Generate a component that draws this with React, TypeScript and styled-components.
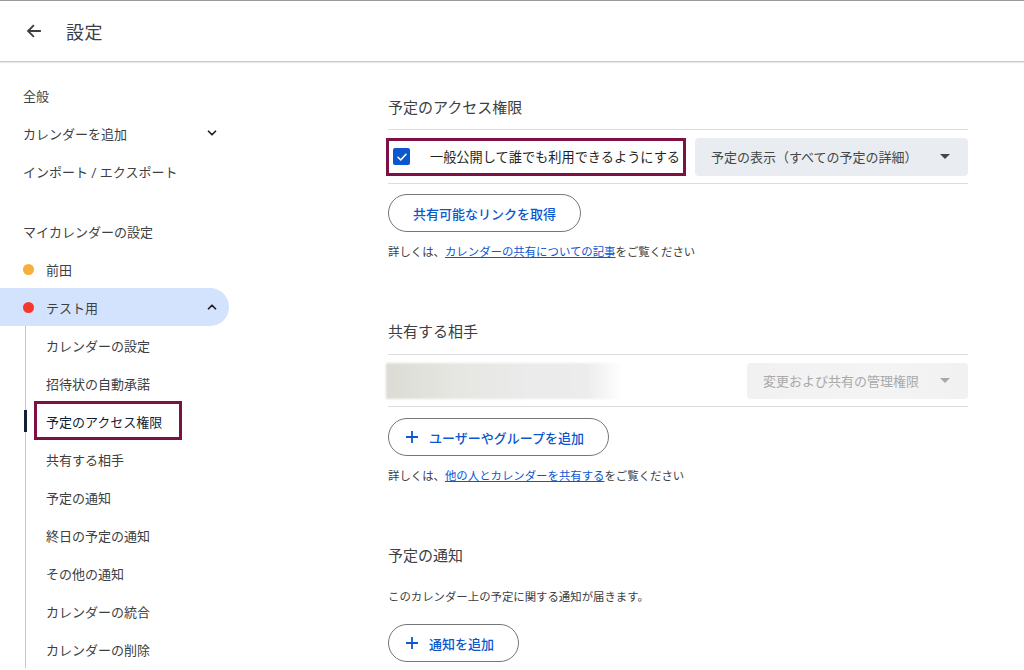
import React from "react";
import styled, { createGlobalStyle } from "styled-components";

const Global = createGlobalStyle`
  html, body { margin: 0; padding: 0; background: #fff; }
  body { font-family: Roboto, "Noto Sans CJK JP", "Noto Sans", sans-serif; color: #3c4043; }
  * { box-sizing: border-box; }
`;

const Page = styled.div`
  width: 1024px;
  height: 670px;
  overflow: hidden;
  border-top: 1px solid #9a9a9a;
  display: flex;
  flex-direction: column;
`;

const Header = styled.header`
  height: 61px;
  flex: none;
  display: flex;
  align-items: center;
  padding-left: 24px;
  border-bottom: 1px solid #c9c9c9;
  box-shadow: 0 1px 1px rgba(0, 0, 0, 0.08);
`;

const BackBtn = styled.div`
  width: 20px;
  height: 20px;
  display: flex;
  align-items: center;
  justify-content: center;
  margin-right: 22px;
  color: #3c4043;
`;

const HeaderTitle = styled.h1`
  margin: 0;
  font-size: 18px;
  font-weight: 400;
  color: #3c4043;
  letter-spacing: 0.5px;
`;

const Body = styled.div`
  flex: 1;
  display: flex;
  min-height: 0;
`;

const Sidebar = styled.nav`
  width: 240px;
  flex: none;
  padding-top: 14px;
  display: flex;
  flex-direction: column;
`;

const NavItem = styled.div<{ $active?: boolean; $gapTop?: number; $h?: number }>`
  height: ${(p) => p.$h ?? 38}px;
  width: 229px;
  display: flex;
  align-items: center;
  padding-left: 23px;
  padding-right: 10px;
  font-size: 13px;
  color: #3c4043;
  margin-top: ${(p) => p.$gapTop ?? 0}px;
  background: ${(p) => (p.$active ? "#d3e3fd" : "transparent")};
  border-radius: 0 19px 19px 0;
`;

const NavLabel = styled.span`
  flex: 1;
`;

const Dot = styled.span<{ $color: string }>`
  width: 11px;
  height: 11px;
  border-radius: 50%;
  background: ${(p) => p.$color};
  margin-right: 12px;
  flex: none;
`;

const SubList = styled.div`
  position: relative;
  display: flex;
  flex-direction: column;
  &::before {
    content: "";
    position: absolute;
    left: 25px;
    top: 0;
    bottom: 0;
    width: 1px;
    background: #c4c7c5;
  }
`;

const SubItem = styled.div<{ $active?: boolean }>`
  position: relative;
  height: 38px;
  display: flex;
  align-items: center;
  padding-left: 46px;
  font-size: 13px;
  color: ${(p) => (p.$active ? "#0b1d3a" : "#3c4043")};
  &::before {
    content: "";
    display: ${(p) => (p.$active ? "block" : "none")};
    position: absolute;
    left: 24px;
    top: 8px;
    width: 3px;
    height: 22px;
    background: #142037;
  }
`;

const HighlightBox = styled.span`
  position: absolute;
  left: 34px;
  top: -1px;
  width: 148px;
  height: 39px;
  border: 3px solid #7e1143;
  pointer-events: none;
`;

const Main = styled.main`
  flex: 1;
  padding-left: 148px;
  padding-top: 34px;
`;

const Content = styled.div`
  width: 580px;
  display: flex;
  flex-direction: column;
`;

const SectionTitle = styled.h2<{ $gapTop?: number }>`
  margin: ${(p) => p.$gapTop ?? 0}px 0 0 0;
  font-size: 15px;
  line-height: 24px;
  font-weight: 400;
  color: #3c4043;
`;

const Row = styled.div<{ $h: number; $mt: number }>`
  margin-top: ${(p) => p.$mt}px;
  height: ${(p) => p.$h}px;
  border-top: 1px solid #dadce0;
  border-bottom: 1px solid #dadce0;
  display: flex;
  align-items: center;
  gap: 9px;
`;

const PublicBox = styled.div`
  width: 300px;
  height: 38px;
  margin-left: -2px;
  border: 3px solid #7e1143;
  display: flex;
  align-items: center;
  padding-left: 4px;
  gap: 20px;
  flex: none;
`;

const Check = styled.span`
  width: 17px;
  height: 17px;
  border-radius: 2px;
  background: #0b57d0;
  display: flex;
  align-items: center;
  justify-content: center;
  flex: none;
`;

const CheckLabel = styled.span`
  font-size: 13.2px;
  color: #1f1f1f;
  white-space: nowrap;
`;

const Select = styled.div<{ $disabled?: boolean }>`
  flex: ${(p) => (p.$disabled ? "none" : "1")};
  width: ${(p) => (p.$disabled ? "221px" : "auto")};
  margin-left: ${(p) => (p.$disabled ? "auto" : "0")};
  height: ${(p) => (p.$disabled ? "36px" : "38px")};
  border-radius: 4px;
  background: ${(p) => (p.$disabled ? "linear-gradient(90deg,#f1f1f1,#f4f4f4 60%,#f1f1f1)" : "#e9edf2")};
  display: flex;
  align-items: center;
  justify-content: space-between;
  padding: 0 18px 0 16px;
  font-size: 13px;
  color: ${(p) => (p.$disabled ? "#a9a9a9" : "#444746")};
`;

const Caret = styled.span<{ $disabled?: boolean }>`
  width: 0;
  height: 0;
  border-left: 5px solid transparent;
  border-right: 5px solid transparent;
  border-top: 5px solid ${(p) => (p.$disabled ? "#a9a9a9" : "#444746")};
`;

const Blurred = styled.div`
  width: 236px;
  height: 36px;
  margin-left: -2px;
  background: linear-gradient(90deg, #dcdcd5 0%, #e6e6e2 30%, #ebebeb 60%, #ececec 85%, #ffffff 100%);
  filter: blur(1px);
`;

const PillButton = styled.button<{ $mt: number; $icon?: boolean }>`
  margin-top: ${(p) => p.$mt}px;
  align-self: flex-start;
  height: 38px;
  border: 1px solid #747775;
  border-radius: 19px;
  background: #fff;
  padding: 0 24px 0 ${(p) => (p.$icon ? 16 : 24)}px;
  font-family: inherit;
  font-size: 13px;
  font-weight: 500;
  color: #0b57d0;
  display: flex;
  align-items: center;
  gap: 10px;
`;

const Help = styled.p<{ $mt: number }>`
  margin: ${(p) => p.$mt}px 0 0 0;
  font-size: 11.4px;
  line-height: 16px;
  color: #3c4043;
`;

const Link = styled.a`
  color: #0b57d0;
  text-decoration: underline;
`;

const Chevron = ({ up }: { up?: boolean }) => (
  <svg width="14" height="14" viewBox="0 0 24 24" fill="none" stroke="#1f1f1f" strokeWidth="3" strokeLinecap="round" strokeLinejoin="round">
    {up ? <polyline points="6 15 12 9 18 15" /> : <polyline points="6 9 12 15 18 9" />}
  </svg>
);

const Plus = () => (
  <svg width="14" height="14" viewBox="0 0 14 14">
    <path d="M7 1v12M1 7h12" stroke="#0b57d0" strokeWidth="1.8" />
  </svg>
);

export default function App() {
  const subs = [
    "カレンダーの設定",
    "招待状の自動承諾",
    "予定のアクセス権限",
    "共有する相手",
    "予定の通知",
    "終日の予定の通知",
    "その他の通知",
    "カレンダーの統合",
    "カレンダーの削除",
  ];
  return (
    <>
      <Global />
      <Page>
        <Header>
          <BackBtn>
            <svg width="18" height="18" viewBox="0 0 24 24" fill="none" stroke="#3c4043" strokeWidth="2.4" strokeLinecap="square">
              <path d="M20 12H5M11 5l-7 7 7 7" />
            </svg>
          </BackBtn>
          <HeaderTitle>設定</HeaderTitle>
        </Header>
        <Body>
          <Sidebar>
            <NavItem><NavLabel>全般</NavLabel></NavItem>
            <NavItem><NavLabel>カレンダーを追加</NavLabel><Chevron /></NavItem>
            <NavItem><NavLabel>インポート / エクスポート</NavLabel></NavItem>
            <NavItem $gapTop={22}><NavLabel>マイカレンダーの設定</NavLabel></NavItem>
            <NavItem><Dot $color="#f6ae3c" /><NavLabel>前田</NavLabel></NavItem>
            <NavItem $active><Dot $color="#f2392c" /><NavLabel>テスト用</NavLabel><Chevron up /></NavItem>
            <SubList>
              {subs.map((s, i) => (
                <SubItem key={s} $active={i === 2}>
                  {s}
                  {i === 2 && <HighlightBox />}
                </SubItem>
              ))}
            </SubList>
          </Sidebar>
          <Main>
            <Content>
              <SectionTitle>予定のアクセス権限</SectionTitle>
              <Row $h={55} $mt={9}>
                <PublicBox>
                  <Check>
                    <svg width="12" height="12" viewBox="0 0 24 24" fill="none" stroke="#fff" strokeWidth="3.2" strokeLinecap="round" strokeLinejoin="round">
                      <polyline points="4 12.5 9.5 18 20 6.5" />
                    </svg>
                  </Check>
                  <CheckLabel>一般公開して誰でも利用できるようにする</CheckLabel>
                </PublicBox>
                <Select>
                  予定の表示（すべての予定の詳細）
                  <Caret />
                </Select>
              </Row>
              <PillButton $mt={10}>共有可能なリンクを取得</PillButton>
              <Help $mt={12}>
                詳しくは、<Link>カレンダーの共有についての記事</Link>をご覧ください
              </Help>

              <SectionTitle $gapTop={60}>共有する相手</SectionTitle>
              <Row $h={53} $mt={10}>
                <Blurred />
                <Select $disabled>
                  変更および共有の管理権限
                  <Caret $disabled />
                </Select>
              </Row>
              <PillButton $mt={11} $icon><Plus />ユーザーやグループを追加</PillButton>
              <Help $mt={12}>
                詳しくは、<Link>他の人とカレンダーを共有する</Link>をご覧ください
              </Help>

              <SectionTitle $gapTop={60}>予定の通知</SectionTitle>
              <Help $mt={21}>このカレンダー上の予定に関する通知が届きます。</Help>
              <PillButton $mt={19} $icon><Plus />通知を追加</PillButton>
            </Content>
          </Main>
        </Body>
      </Page>
    </>
  );
}
